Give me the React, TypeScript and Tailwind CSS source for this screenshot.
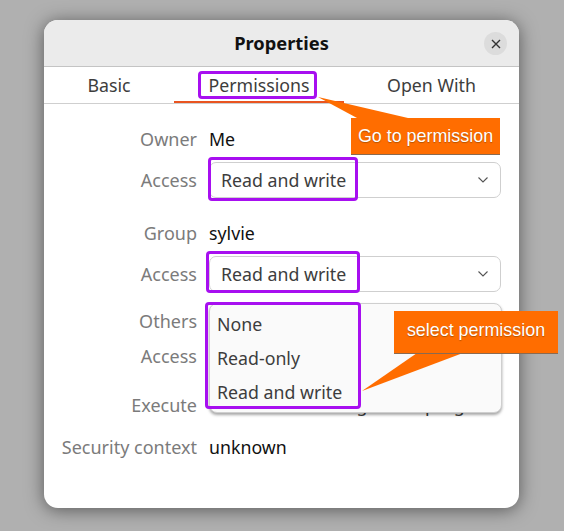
const ui = "font-['Noto_Sans',sans-serif] text-[17.75px]";
const callout = "absolute flex items-center justify-center bg-[#ff6d00] border-b border-[#8a6a50] font-['Liberation_Sans',sans-serif] text-[17.9px] text-white [text-shadow:0_1px_1px_rgba(90,50,0,0.45)]";
const frame = "absolute rounded-[4px] border-[3px] border-[#a70ff0]";

function Chevron() {
  return (
    <svg width="12" height="8" viewBox="0 0 12 8" fill="none" stroke="#555" strokeWidth="1.1">
      <path d="M1.5 1.5 6 6l4.5-4.5" />
    </svg>
  );
}

function Label({ children }: { children: React.ReactNode }) {
  return <span className="w-[153px] shrink-0 pt-[1px] text-right text-[18px] text-[#7b7b7b]">{children}</span>;
}

function Row({ label, className, children }: { label: string; className: string; children: React.ReactNode }) {
  return (
    <div className={`flex items-center gap-3 ${className}`}>
      <Label>{label}</Label>
      {children}
    </div>
  );
}

function Select() {
  return (
    <div className="flex h-full flex-1 items-center justify-between rounded-[7px] border border-[#cfcfcf] bg-white pl-[11px] pr-[11px] text-[#3d3d3d]">
      <span>Read and write</span>
      <Chevron />
    </div>
  );
}

export default function App() {
  return (
    <div className={`relative h-[531px] w-[564px] overflow-hidden bg-[#b0b0b0] pl-[44px] pt-[20px] ${ui}`}>
      <div className="relative flex h-[488px] w-[475px] flex-col overflow-hidden rounded-[14px] bg-white shadow-[0_2px_18px_rgba(0,0,0,0.5)]">
        <header className="relative flex h-[47px] shrink-0 items-center justify-center border-b border-[#c4c4c4] bg-[#ebebeb]">
          <span className="text-[18.3px] font-bold text-[#111]">Properties</span>
          <button className="absolute right-[12px] top-[12px] flex h-[23px] w-[23px] items-center justify-center rounded-full bg-[#dcdcdc]">
            <svg width="10" height="10" viewBox="0 0 10 10" stroke="#333" strokeWidth="1.4">
              <path d="M1 1l8 8M9 1l-8 8" />
            </svg>
          </button>
        </header>

        <nav className="grid h-[37px] shrink-0 grid-cols-[130px_170px_175px] border-b border-[#cfcfcf] text-center text-[#3d3d3d]">
          <div className="flex h-[36px] items-center justify-center">Basic</div>
          <div className="flex h-[36px] items-center justify-center border-b-[2px] border-[#e95420] pt-[2px]">Permissions</div>
          <div className="flex h-[36px] items-center justify-center">Open With</div>
        </nav>

        <div className="flex flex-col pr-[18px] text-[#111]">
          <Row label="Owner" className="mt-[17px] h-[36px]">
            <span>Me</span>
          </Row>
          <Row label="Access" className="mt-[5px] h-[36px]">
            <Select />
          </Row>
          <Row label="Group" className="mt-[17px] h-[36px]">
            <span>sylvie</span>
          </Row>
          <Row label="Access" className="mt-[5px] h-[36px]">
            <Select />
          </Row>
          <Row label="Others" className="mt-[13px] h-[32px]">
            <span />
          </Row>
          <Row label="Access" className="mt-[3px] h-[32px]">
            <span />
          </Row>
          <Row label="Execute" className="mt-[15px] h-[36px]">
            <span className="ml-[28px] whitespace-nowrap text-[#3d3d3d]">Allow executing file as program</span>
          </Row>
          <Row label="Security context" className="mt-[6px] h-[36px]">
            <span>unknown</span>
          </Row>
        </div>
      </div>

      {/* open dropdown over the form */}
      <ul className="absolute left-[209px] top-[303px] flex h-[110px] w-[293px] flex-col rounded-[8px] border border-[#cfcfcf] bg-[#fafafa] pl-[7px] pt-[3px] text-[#3d3d3d] shadow-[0_2px_3px_rgba(0,0,0,0.35)]">
        <li className="flex h-[34px] items-center">None</li>
        <li className="flex h-[34px] items-center">Read-only</li>
        <li className="flex h-[34px] items-center">Read and write</li>
      </ul>

      {/* annotations */}
      <div className={`${frame} left-[198px] top-[71px] h-[28px] w-[119px]`} />
      <div className={`${frame} left-[208px] top-[157px] h-[44px] w-[150px]`} />
      <div className={`${frame} left-[206px] top-[251px] h-[42px] w-[154px]`} />
      <div className={`${frame} left-[205px] top-[302px] h-[107px] w-[156px]`} />

      <svg className="absolute left-0 top-0" width="564" height="531" fill="#ff6d00">
        <path d="M318 97 408 118 357 118Z" />
        <path d="M362 391 417 353 463 353Z" />
      </svg>
      <div className={`${callout} left-[351px] top-[118px] h-[37px] w-[149px]`}>Go to permission</div>
      <div className={`${callout} left-[394px] top-[311px] h-[43px] w-[164px] pb-[3px]`}>select permission</div>
    </div>
  );
}
